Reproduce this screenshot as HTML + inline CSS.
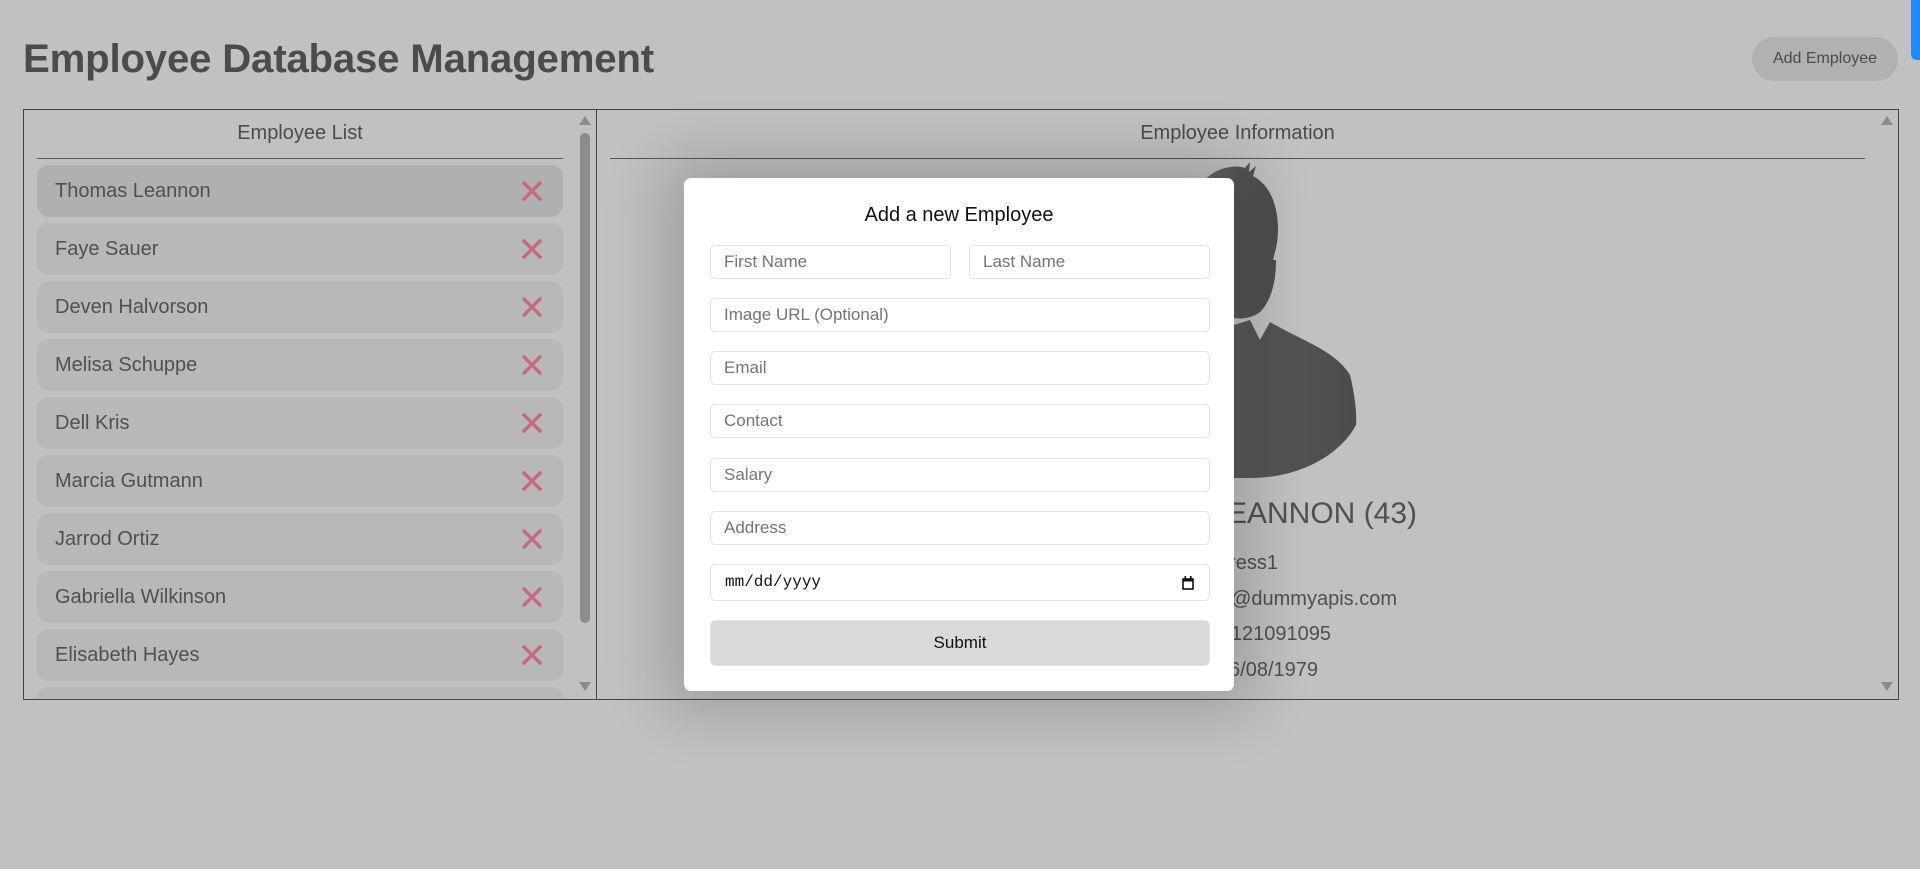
<!DOCTYPE html>
<html><head><meta charset="utf-8">
<style>
*{box-sizing:border-box;margin:0;padding:0}
html,body{width:1920px;height:869px;overflow:hidden;background:#c1c1c1;font-family:"Liberation Sans",Arial,sans-serif;position:relative}
.abs{position:absolute}
h1{position:absolute;left:23px;top:36px;font-size:40.2px;font-weight:bold;color:#4b4b4b;letter-spacing:-0.2px}
.btn{left:1752px;top:37px;width:146px;height:44px;border-radius:22px;background:#b1b1b1;color:#4b4b4b;font-size:16px;line-height:44px;text-align:center}
.blue{left:1911px;top:-6px;width:14px;height:66px;border-radius:6px;background:#1a8cff}
.box{left:23px;top:109px;width:1876px;height:591px;border:1px solid #444}
.vdiv{left:596px;top:109px;width:1px;height:591px;background:#444}
.hd{font-size:20px;color:#4b4b4b;text-align:center}
.line{height:1px;background:#555}
.item{left:37px;width:526px;height:52px;border-radius:12px;background:#b8b8b8;font-size:20px;color:#505050;line-height:52px;padding-left:18px}
.item svg{position:absolute;left:484px;top:15px}
.sb{background:#8c8c8c}
.info{font-size:20px;color:#505050;white-space:nowrap;text-align:right}
.modal{left:684px;top:178px;width:550px;height:513px;background:#fff;border-radius:7px;box-shadow:0 0 60px 20px rgba(0,0,0,.18)}
.modal .t{position:absolute;left:0;width:550px;top:26px;text-align:center;font-size:20px;color:#111}
.in{position:absolute;height:34px;border:1px solid #e4e4e4;border-radius:5px;font-size:17px;color:#757575;line-height:32px;padding-left:13px}
</style></head><body>
<h1>Employee Database Management</h1>
<div class="abs btn">Add Employee</div>
<div class="abs blue"></div>
<div class="abs box"></div>
<div class="abs vdiv"></div>
<div class="abs hd" style="left:37px;width:526px;top:122px">Employee List</div>
<div class="abs line" style="left:37px;width:526px;top:158px"></div>
<div class="abs hd" style="left:610px;width:1255px;top:122px">Employee Information</div>
<div class="abs line" style="left:610px;width:1255px;top:158px"></div>
<svg class="abs" style="left:578px;top:114px" width="14" height="12"><path d="M7 2 L13 11 L1 11Z" fill="#8c8c8c"/></svg>
<div class="abs sb" style="left:580px;top:133px;width:10px;height:490px;border-radius:5px"></div>
<svg class="abs" style="left:578px;top:681px" width="14" height="12"><path d="M1 1 L13 1 L7 10Z" fill="#8c8c8c"/></svg>
<svg class="abs" style="left:1880px;top:114px" width="14" height="12"><path d="M7 2 L13 11 L1 11Z" fill="#8c8c8c"/></svg>
<svg class="abs" style="left:1880px;top:681px" width="14" height="12"><path d="M1 1 L13 1 L7 10Z" fill="#8c8c8c"/></svg>
<div class="abs" style="left:37px;top:165px;width:526px;height:534px;overflow:hidden">
<div class="abs item" style="left:0;top:0;background:#b0b0b0">Thomas Leannon<svg width="22" height="22"><path d="M3 3L19 19M19 3L3 19" stroke="#c46b7e" stroke-width="3.5" stroke-linecap="round"/></svg></div>
<div class="abs item" style="left:0;top:58px">Faye Sauer<svg width="22" height="22"><path d="M3 3L19 19M19 3L3 19" stroke="#c46b7e" stroke-width="3.5" stroke-linecap="round"/></svg></div>
<div class="abs item" style="left:0;top:116px">Deven Halvorson<svg width="22" height="22"><path d="M3 3L19 19M19 3L3 19" stroke="#c46b7e" stroke-width="3.5" stroke-linecap="round"/></svg></div>
<div class="abs item" style="left:0;top:174px">Melisa Schuppe<svg width="22" height="22"><path d="M3 3L19 19M19 3L3 19" stroke="#c46b7e" stroke-width="3.5" stroke-linecap="round"/></svg></div>
<div class="abs item" style="left:0;top:232px">Dell Kris<svg width="22" height="22"><path d="M3 3L19 19M19 3L3 19" stroke="#c46b7e" stroke-width="3.5" stroke-linecap="round"/></svg></div>
<div class="abs item" style="left:0;top:290px">Marcia Gutmann<svg width="22" height="22"><path d="M3 3L19 19M19 3L3 19" stroke="#c46b7e" stroke-width="3.5" stroke-linecap="round"/></svg></div>
<div class="abs item" style="left:0;top:348px">Jarrod Ortiz<svg width="22" height="22"><path d="M3 3L19 19M19 3L3 19" stroke="#c46b7e" stroke-width="3.5" stroke-linecap="round"/></svg></div>
<div class="abs item" style="left:0;top:406px">Gabriella Wilkinson<svg width="22" height="22"><path d="M3 3L19 19M19 3L3 19" stroke="#c46b7e" stroke-width="3.5" stroke-linecap="round"/></svg></div>
<div class="abs item" style="left:0;top:464px">Elisabeth Hayes<svg width="22" height="22"><path d="M3 3L19 19M19 3L3 19" stroke="#c46b7e" stroke-width="3.5" stroke-linecap="round"/></svg></div>
<div class="abs item" style="left:0;top:522px">Kyle Smith</div>
</div>
<svg class="abs" style="left:1100px;top:160px" width="300" height="320">
<defs><linearGradient id="g" x1="0" x2="1"><stop offset="0" stop-color="#6a6a6a"/><stop offset="0.5" stop-color="#555"/><stop offset="1" stop-color="#4c4c4c"/></linearGradient></defs>
<path d="M134 165 L150 160 L160 180 L170 162 C200 180 235 190 250 215 C255 235 257 255 256 265 C240 295 200 318 150 318 L60 318 C60 250 90 190 134 165Z" fill="url(#g)"/>
<path d="M105 20 C115 8 135 4 145 8 L150 2 L149 12 L156 6 L153 16 C170 25 178 45 178 70 C178 85 174 95 173 100 L176 100 C176 120 172 140 160 152 C150 160 130 162 120 150 C105 130 98 90 100 60 C102 40 100 30 105 20Z" fill="url(#g)"/>
</svg>
<div class="abs info" style="right:503px;top:497px;font-size:30px">THOMAS LEANNON (43)</div>
<div class="abs info" style="right:642px;top:552px">Address1</div>
<div class="abs info" style="right:523px;top:588px">thomas.leannon@dummyapis.com</div>
<div class="abs info" style="right:589px;top:623px">9121091095</div>
<div class="abs info" style="right:602px;top:659px">16/08/1979</div>
<div class="abs modal">
<div class="t">Add a new Employee</div>
<div class="in" style="left:26px;top:67px;width:241px">First Name</div>
<div class="in" style="left:285px;top:67px;width:241px">Last Name</div>
<div class="in" style="left:26px;top:120px;width:500px">Image URL (Optional)</div>
<div class="in" style="left:26px;top:173px;width:500px">Email</div>
<div class="in" style="left:26px;top:226px;width:500px">Contact</div>
<div class="in" style="left:26px;top:280px;width:500px">Salary</div>
<div class="in" style="left:26px;top:333px;width:500px">Address</div>
<div class="in" style="left:26px;top:386px;width:500px;height:37px;line-height:35px;color:#111;font-family:'Liberation Mono',monospace;font-size:16px;padding-left:14px">mm/dd/yyyy
<svg style="position:absolute;right:15px;top:11px" width="12" height="14"><rect x="1" y="3" width="10" height="10" fill="none" stroke="#111" stroke-width="1.6"/><rect x="1" y="2.5" width="10" height="3" fill="#111"/><rect x="2.5" y="0" width="1.6" height="3" fill="#111"/><rect x="8" y="0" width="1.6" height="3" fill="#111"/></svg></div>
<div class="in" style="left:26px;top:442px;width:500px;height:46px;line-height:44px;background:#d9d9d9;color:#111;text-align:center;padding:0;border-color:#e6e6e6">Submit</div>
</div>
</body></html>
